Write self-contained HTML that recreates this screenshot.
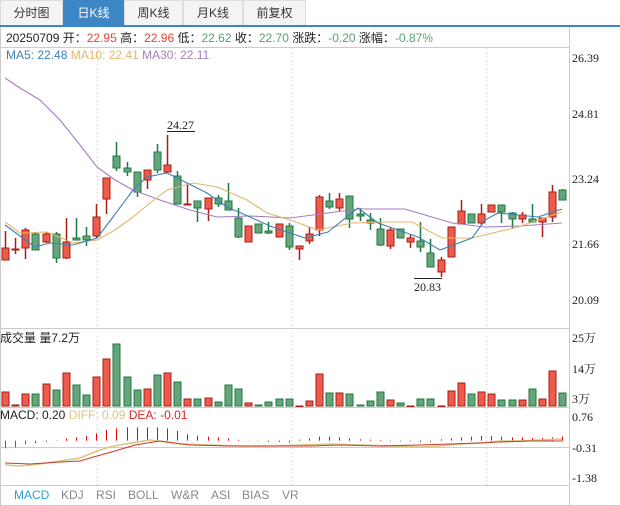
<!DOCTYPE html>
<html><head><meta charset="utf-8"><style>
body{margin:0;width:620px;height:506px;background:#fff;overflow:hidden;font-family:"Liberation Sans","Noto Sans CJK SC",sans-serif;position:relative}
.tab{position:absolute;top:0;height:25px;line-height:25px;text-align:center;font-size:12px;color:#333;background:#f4f4f4;border:1px solid #ddd;border-bottom:none;box-sizing:border-box}
.tab.a{background:#3d86c6;color:#fff;border-color:#3d86c6}
.t{position:absolute;font-size:12px;white-space:nowrap}
.b{position:absolute;top:488px;font-size:12px;color:#888}
.ax{position:absolute;left:572px;font-family:"Liberation Serif","Noto Serif CJK SC",serif;font-size:12px;color:#222}
</style></head><body>
<div class="tab" style="left:0;width:63px">分时图</div>
<div class="tab a" style="left:63px;width:61px">日K线</div>
<div class="tab" style="left:124px;width:59px">周K线</div>
<div class="tab" style="left:183px;width:60px">月K线</div>
<div class="tab" style="left:243px;width:63px">前复权</div>
<div style="position:absolute;left:0;top:25px;width:620px;height:2px;background:#3d86c6"></div>
<svg id="s" width="620" height="506" style="position:absolute;left:0;top:0" xmlns="http://www.w3.org/2000/svg">
<g stroke="#ccc" stroke-width="1" fill="none">
<line x1="0.5" y1="27" x2="0.5" y2="506"/>
<line x1="569.5" y1="27" x2="569.5" y2="506"/>
<line x1="0" y1="47.5" x2="569" y2="47.5"/>
<line x1="0" y1="328.5" x2="569" y2="328.5"/>
<line x1="0" y1="407.5" x2="569" y2="407.5"/>
<line x1="0" y1="447.5" x2="569" y2="447.5"/>
<line x1="0" y1="485.5" x2="569" y2="485.5"/>
<line x1="0" y1="505.5" x2="620" y2="505.5"/>
</g>
<g stroke="#ccc" stroke-width="1" stroke-dasharray="1,3">
<line x1="97.5" y1="48" x2="97.5" y2="485"/>
<line x1="291.5" y1="48" x2="291.5" y2="485"/>
<line x1="486.5" y1="48" x2="486.5" y2="485"/>
</g>
<g id="c"></g>
<g fill="none" stroke-width="1.1">
<polyline stroke="#a77bc1" points="5,78 20,88 40,100 60,120 80,145 97,167 115,180 133,190 160,200 190,210 217,217 250,216 290,218 320,214 358,209 405,209 452,223 485,227 520,226 562,223"/>
<polyline stroke="#e8b36b" points="5,222 20,233 47,232 73,243 97,240 115,230 133,217 150,203 167,190 193,183 217,187 247,200 267,213 290,220 318,230 352,223 385,222 412,222 442,238 472,238 518,227 562,212"/>
<polyline stroke="#3e7fb5" points="5,225 20,236 35,247 50,243 73,245 97,238 113,217 133,190 147,177 167,173 187,183 207,193 227,207 250,217 270,226 290,233 305,238 328,232 358,208 378,223 418,237 440,250 472,238 485,220 498,213 538,217 562,209"/>
<polyline stroke="#d8c77f" stroke-width="1.6" points="5,465 20,466 40,464 60,461 80,458 97,451 110,447 125,444 150,440 180,444 210,445 240,446 270,446 300,445 330,444 360,445 390,446 420,447 440,446 460,444 480,443 500,441 520,441 562,439"/>
<polyline stroke="#c83a2e" points="5,463 30,464 60,462 80,461 97,456 115,451 135,445 160,441 190,445 230,446 270,446 310,446 340,445 380,446 420,445 450,444 480,443 500,442 530,441 562,441"/>
</g>
<g font-family="Liberation Serif,serif" font-size="12" fill="#222">
<text x="167" y="129">24.27</text><line x1="167" y1="131.5" x2="195" y2="131.5" stroke="#222"/>
<text x="414" y="291">20.83</text><line x1="414" y1="278.5" x2="442" y2="278.5" stroke="#222"/>
</g>
</svg>
<div class="t" style="left:6px;top:29px;color:#222">20250709 开：<span style="color:#e0463a">22.95</span> 高：<span style="color:#e0463a">22.96</span> 低：<span style="color:#5aa06e">22.62</span> 收：<span style="color:#5aa06e">22.70</span> 涨跌：<span style="color:#5aa06e">-0.20</span> 涨幅：<span style="color:#5aa06e">-0.87%</span></div>
<div class="t" style="left:6px;top:48px"><span style="color:#3e7fb5">MA5: 22.48</span> <span style="color:#e8b36b">MA10: 22.41</span> <span style="color:#a77bc1">MA30: 22.11</span></div>
<div class="t" style="left:0;top:329px;color:#222">成交量 量7.2万</div>
<div class="t" style="left:0;top:408px;color:#222">MACD: 0.20 <span style="color:#d8c77f">DIFF: 0.09</span> <span style="color:#d22">DEA: -0.01</span></div>
<div class="b" style="left:14px;color:#2aa0d8">MACD</div>
<div class="b" style="left:61px">KDJ</div>
<div class="b" style="left:96px">RSI</div>
<div class="b" style="left:128px">BOLL</div>
<div class="b" style="left:171px">W&amp;R</div>
<div class="b" style="left:211px">ASI</div>
<div class="b" style="left:242px">BIAS</div>
<div class="b" style="left:282px">VR</div>
<div class="ax" style="top:51px">26.39</div>
<div class="ax" style="top:107px">24.81</div>
<div class="ax" style="top:172px">23.24</div>
<div class="ax" style="top:237px">21.66</div>
<div class="ax" style="top:293px">20.09</div>
<div class="ax" style="top:329px">25万</div>
<div class="ax" style="top:360px">14万</div>
<div class="ax" style="top:390px">3万</div>
<div class="ax" style="top:410px">0.76</div>
<div class="ax" style="top:441px">-0.31</div>
<div class="ax" style="top:471px">-1.38</div>
<script>
var K=[['r',248,260,231,260],['r',249,250,238,254],['r',230,248,228,259],['g',234,250,232,250],['r',234,242,232,243],['g',234,258,232,263],['r',242,258,218,259],['g',238,240,218,240],['g',236,240,227,246],['r',217,236,204,238],['r',178,199,178,214],['g',156,168,142,171],['g',168,172,162,176],['g',172,192,172,197],['r',170,180,170,189],['g',152,170,144,173],['r',165,172,135,172],['g',176,204,171,204],['r',204,205,184,205],['g',201,208,201,222],['r',198,209,198,221],['g',198,204,195,207],['g',201,210,183,210],['g',218,237,208,238],['r',226,242,226,242],['g',224,233,224,233],['g',231,233,222,234],['r',224,237,224,237],['g',226,247,223,250],['r',246,249,246,260],['r',234,241,227,244],['r',197,230,195,236],['g',201,207,193,209],['r',199,208,193,211],['g',196,219,196,228],['g',214,216,208,221],['g',220,223,213,230],['g',229,245,218,246],['r',230,246,227,249],['g',229,238,229,238],['r',238,242,235,248],['g',241,247,222,252],['g',253,267,239,267],['r',260,272,257,277],['r',227,257,227,257],['r',211,224,200,224],['g',214,223,214,223],['r',214,223,204,225],['r',205,212,205,212],['g',205,212,205,223],['g',213,219,212,229],['r',215,219,212,223],['g',219,222,204,223],['r',218,222,218,237],['r',192,217,185,222],['g',190,200,189,200]];
var V=[392,405,394,394,384,390,373,385,395,377,359,344,377,390,389,375,373,382,399,399,398,402,385,389,403,405,402,399,399,406,401,374,393,393,394,405,401,392,400,403,406,399,399,406,391,383,394,392,394,400,400,400,389,399,371,393];
var H=[385,382,373,370,366,363,355,352,348,340,330,325,322,322,322,322,325,333,343,347,350,352,355,360,361,363,366,366,368,359,355,350,350,352,355,358,359,360,364,364,364,367,366,358,355,352,350,348,348,350,352,352,354,354,352,350];
var Vc=['r','r','r','g','r','g','r','g','g','r','r','g','g','g','r','g','r','g','r','g','r','g','g','g','r','g','g','g','g','r','r','r','g','r','g','g','g','g','r','g','r','g','g','r','r','r','g','r','r','g','g','r','g','r','r','g'];
var s='';
for(var i=0;i<56;i++){var x=5+i*10.13,k=K[i],f=k[0]=='r'?'#ec5b4b':'#66a47c',st=k[0]=='r'?'#a91e14':'#1c7a3e';
var xr=Math.round(x)+0.5;
s+='<line x1="'+xr+'" x2="'+xr+'" y1="'+k[3]+'" y2="'+k[4]+'" stroke="'+st+'" stroke-width="1.5"/>';
var h=Math.max(1,k[2]-k[1]);s+='<rect x="'+(xr-3.5)+'" y="'+k[1]+'" width="7" height="'+h+'" fill="'+f+'" stroke="'+st+'"/>';
var vf=Vc[i]=='r'?'#ec5b4b':'#66a47c',vs=Vc[i]=='r'?'#a91e14':'#1c7a3e';
s+='<rect x="'+(xr-3.5)+'" y="'+V[i]+'" width="7" height="'+Math.max(0.5,406-V[i])+'" fill="'+vf+'" stroke="'+vs+'"/>';
var hy=320+H[i]/3,z=320+362/3;
s+='<line x1="'+xr+'" x2="'+xr+'" y1="'+z+'" y2="'+hy+'" stroke="'+(hy<z?'#e00':'#1c8a3e')+'" stroke-width="1"/>';}
document.getElementById('c').innerHTML=s;
</script>
</body></html>
